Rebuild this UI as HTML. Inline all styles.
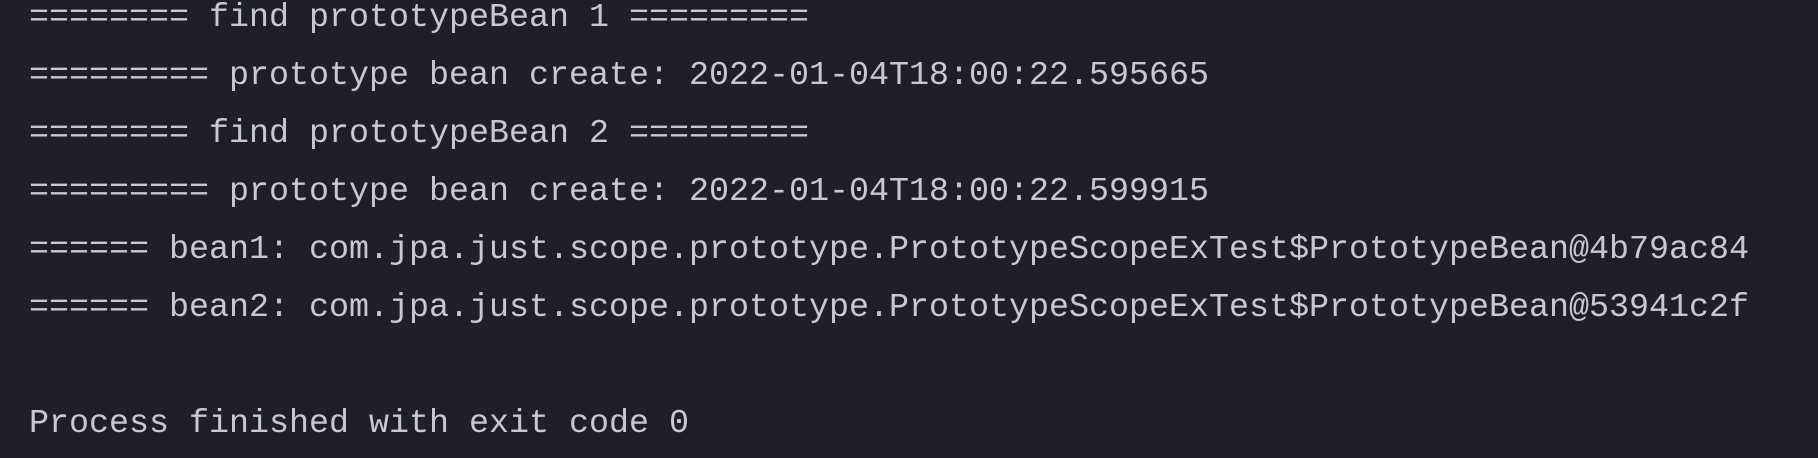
<!DOCTYPE html>
<html><head><meta charset="utf-8"><style>
html,body{margin:0;padding:0;background:#1e1f28;width:1818px;height:458px;overflow:hidden}
pre{margin:0;position:absolute;left:29px;top:-11px;font-family:"Liberation Mono",monospace;font-size:33.33px;line-height:58px;color:#c8c9cf;white-space:pre}
</style></head><body><pre>======== find prototypeBean 1 =========
========= prototype bean create: 2022-01-04T18:00:22.595665
======== find prototypeBean 2 =========
========= prototype bean create: 2022-01-04T18:00:22.599915
====== bean1: com.jpa.just.scope.prototype.PrototypeScopeExTest$PrototypeBean@4b79ac84
====== bean2: com.jpa.just.scope.prototype.PrototypeScopeExTest$PrototypeBean@53941c2f

Process finished with exit code 0</pre></body></html>
